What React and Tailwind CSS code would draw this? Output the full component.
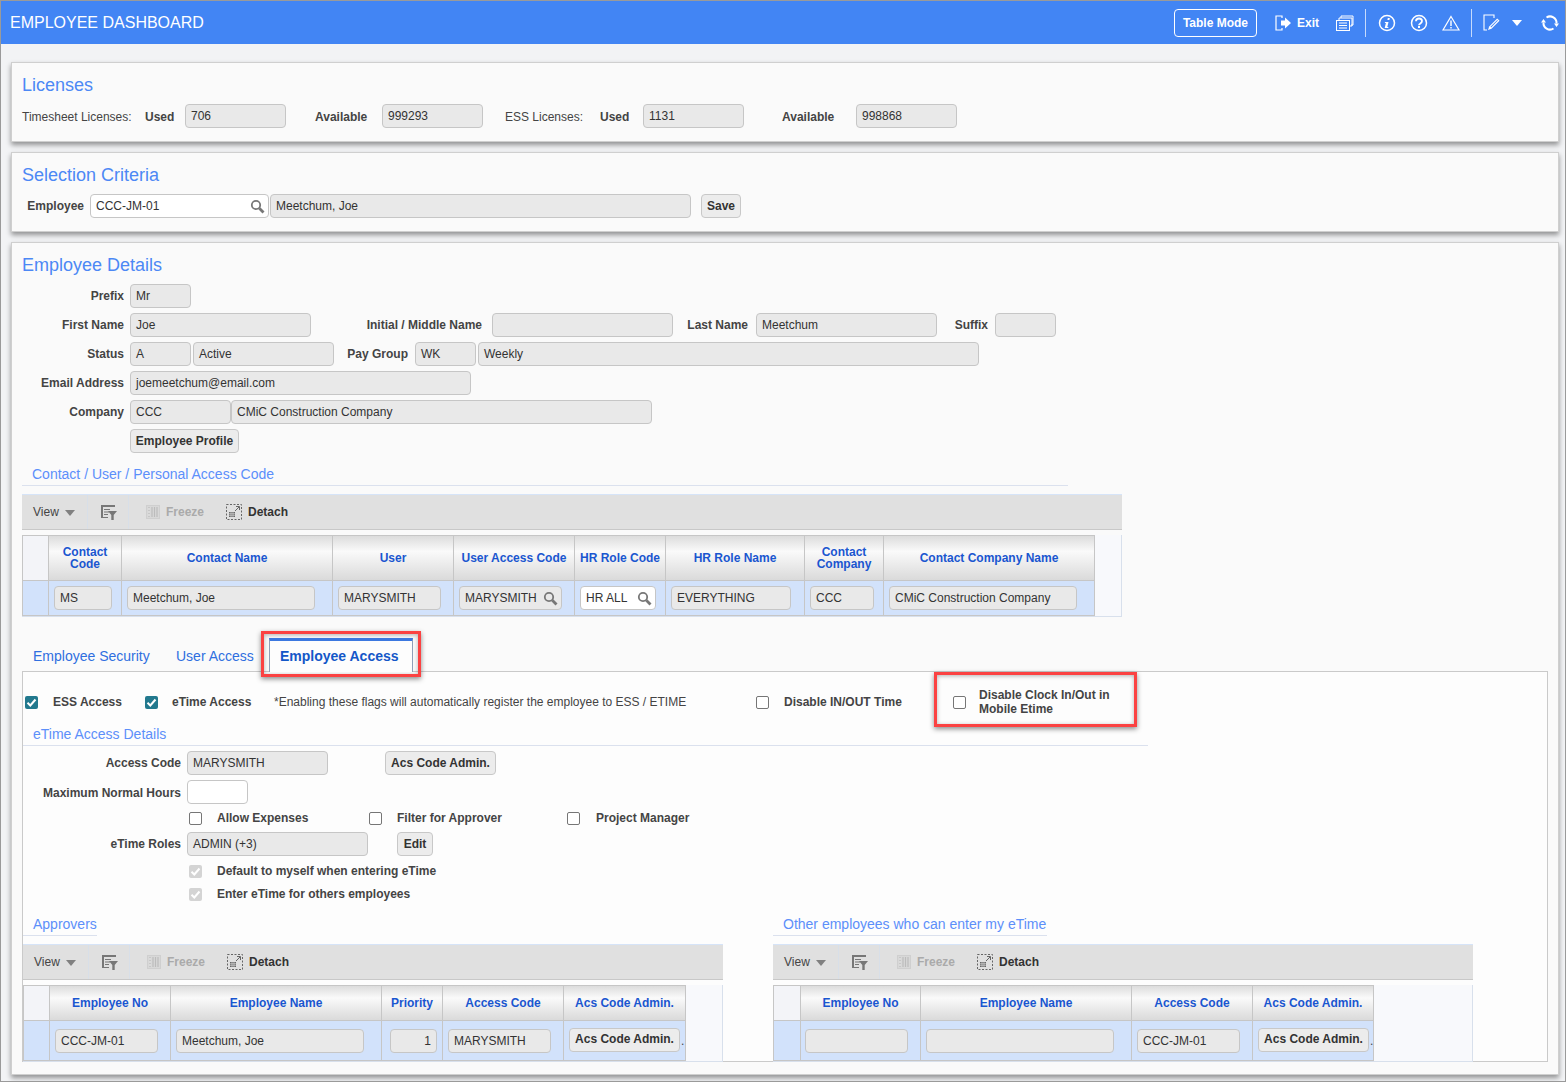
const SearchIcon = () => (
  <svg width="15" height="15" viewBox="0 0 15 15" fill="none" className="mt-[1px] shrink-0 text-[#777]">
    <circle cx="6" cy="6" r="4.200" stroke="currentColor" strokeWidth="1.800" />
    <path d="M9.300 9.300L13.500 13.500" stroke="currentColor" strokeWidth="2.800" />
  </svg>
);

const CheckMark = () => (
  <svg width="11" height="11" viewBox="0 0 11 11" fill="none">
    <path d="M1.500 5.800L4.300 8.500L9.500 2.500" stroke="white" strokeWidth="2" />
  </svg>
);

const Field = ({ className = '', children, white }) => (
  <div className={`flex h-6 shrink-0 items-center rounded-[4px] border border-[#c6c6c6] px-[5px] text-[12px] text-[#333] whitespace-nowrap ${white ? 'bg-white' : 'bg-[#e9e9e9]'} ${className}`}>
    {children}
  </div>
);

const SearchField = ({ className, children, white = true }) => (
  <Field white={white} className={`justify-between pr-[3px] ${className}`}>
    <span>{children}</span>
    <SearchIcon />
  </Field>
);

const Label = ({ className = '', children }) => (
  <div className={`shrink-0 text-[12px] font-bold text-[#444] whitespace-nowrap ${className}`}>{children}</div>
);

const Btn = ({ className = '', children }) => (
  <div className={`flex h-6 shrink-0 items-center justify-center rounded-[4px] border border-[#c8c8c8] bg-[#ececec] pb-[1px] text-[12px] font-bold text-[#333] whitespace-nowrap ${className}`}>
    {children}
  </div>
);

const Box = ({ state, className = '' }) => {
  if (state === 'on') {
    return (
      <span className={`flex size-[13px] shrink-0 items-center justify-center rounded-[2px] bg-[#22798e] ${className}`}>
        <CheckMark />
      </span>
    );
  }
  if (state === 'disabled') {
    return (
      <span className={`flex size-[13px] shrink-0 items-center justify-center rounded-[2px] bg-[#d4d4d4] ${className}`}>
        <CheckMark />
      </span>
    );
  }
  return <span className={`size-[13px] shrink-0 rounded-[2px] border border-[#767676] bg-white ${className}`} />;
};

const Heading = ({ className = '', children }) => (
  <div className={`h-[22px] border-b border-[#dbe1ee] pl-[10px] text-[14px] leading-[20px] text-[#5c8ffa] ${className}`}>{children}</div>
);

const PanelTitle = ({ children }) => (
  <div className="text-[18px] leading-[22px] text-[#4c88f5]">{children}</div>
);

const Row = ({ className = 'mt-[5px]', children }) => <div className={`flex h-6 items-center ${className}`}>{children}</div>;

const FilterIcon = () => (
  <svg width="16" height="15" viewBox="0 0 16 15" className="text-[#777]" fill="none">
    <path d="M0 0h14v2H2v10h5v1H0z" fill="currentColor" />
    <path d="M3 4h6v1H3zM3 6.500h5v1H3zM3 9h4v1H3z" fill="currentColor" />
    <path d="M7 6h9l-3.300 4v5h-2.400v-5z" fill="currentColor" />
  </svg>
);

const FreezeIcon = () => (
  <svg width="14" height="14" viewBox="0 0 14 14" fill="none">
    <rect x="0.500" y="0.500" width="13" height="13" fill="#d8d8d8" stroke="#cfcfcf" />
    <path d="M3 2v10M6 2v10M8.500 2v10M11 2v10" stroke="#bcbcbc" strokeWidth="1.200" />
    <path d="M2 4h2M2 7h2M2 10h2" stroke="#eeeeee" />
  </svg>
);

const DetachIcon = () => (
  <svg width="16" height="16" viewBox="0 0 16 16" fill="none" className="text-[#666]">
    <rect x="0.500" y="0.500" width="15" height="15" stroke="currentColor" strokeDasharray="2 1.500" />
    <path d="M9 7l4-4M10 2.500h3.500V6" stroke="currentColor" />
    <path d="M3 8h6v5H3z" fill="currentColor" />
    <path d="M3 9.700h6M3 11.300h6M5 8v5M7 8v5" stroke="#e0e0e0" strokeWidth="0.600" />
  </svg>
);

const Toolbar = ({ className = '' }) => (
  <div className={`flex h-9 items-center border-t border-b border-t-[#d6e4f8] border-b-[#c8c8c8] bg-[#e0e0e0] text-[12px] ${className}`}>
    <div className="flex h-full w-[66px] shrink-0 items-center border-r border-[#d8dfe8] pl-[11px] text-[#444]">
      View
      <span className="mt-[2px] ml-[6px] border-x-[5px] border-t-[6px] border-x-transparent border-t-[#808080]" />
    </div>
    <div className="flex h-full w-[41px] shrink-0 items-center justify-center border-r border-[#d8dfe8] pl-[1px]">
      <FilterIcon />
    </div>
    <div className="ml-[17px] flex items-center font-bold text-[#aaa]">
      <FreezeIcon />
      <span className="ml-[6px]">Freeze</span>
    </div>
    <div className="ml-[22px] flex items-center font-bold text-[#333]">
      <DetachIcon />
      <span className="ml-[6px]">Detach</span>
    </div>
  </div>
);

const DataTable = ({ columns, headClass, rowClass, firstClass = 'w-[26px]', className = '' }) => (
  <div className={`flex items-start border-r border-b border-[#d8e0ec] bg-[#f8f9fc] ${className}`}>
    <div className="flex flex-col border-t border-l border-[#c6c6c6]">
      <div className="flex">
        <div className={`shrink-0 border-r border-b border-[#c6c6c6] bg-[#f3f4f8] ${firstClass} ${headClass}`} />
        {columns.map((c) => (
          <div
            key={c.key}
            className={`flex shrink-0 items-center justify-center border-r border-b border-[#c6c6c6] bg-linear-to-b from-[#dcdcdc] via-[#fafafa] via-35% to-[#dadada] text-center text-[12px] leading-[12px] font-bold text-[#1a56d0] ${headClass} ${c.w}`}
          >
            {c.label}
          </div>
        ))}
      </div>
      <div className="flex border-b border-[#c6c6c6]">
        <div className={`shrink-0 border-r border-[#c6c6c6] bg-[#d2e2fb] ${firstClass} ${rowClass}`} />
        {columns.map((c) => (
          <div key={c.key} className={`flex shrink-0 items-center border-r border-[#c6c6c6] bg-[#d2e2fb] pl-[5px] ${rowClass} ${c.w}`}>
            {c.cell}
          </div>
        ))}
      </div>
    </div>
  </div>
);

const contactColumns = [
  { key: 'code', label: <>Contact<br />Code</>, w: 'w-[73px]', cell: <Field className="w-[58px]">MS</Field> },
  { key: 'name', label: 'Contact Name', w: 'w-[211px]', cell: <Field className="w-[188px]">Meetchum, Joe</Field> },
  { key: 'user', label: 'User', w: 'w-[121px]', cell: <Field className="w-[103px]">MARYSMITH</Field> },
  { key: 'access', label: 'User Access Code', w: 'w-[121px]', cell: <SearchField white={false} className="w-[103px]">MARYSMITH</SearchField> },
  { key: 'role', label: 'HR Role Code', w: 'w-[91px]', cell: <SearchField className="w-[76px]">HR ALL</SearchField> },
  { key: 'roleName', label: 'HR Role Name', w: 'w-[139px]', cell: <Field className="w-[120px]">EVERYTHING</Field> },
  { key: 'company', label: <>Contact<br />Company</>, w: 'w-[79px]', cell: <Field className="w-[64px]">CCC</Field> },
  { key: 'companyName', label: 'Contact Company Name', w: 'w-[211px]', cell: <Field className="w-[188px]">CMiC Construction Company</Field> },
];

const approverColumns = [
  { key: 'no', label: 'Employee No', w: 'w-[121px]', cell: <Field className="w-[103px]">CCC-JM-01</Field> },
  { key: 'name', label: 'Employee Name', w: 'w-[211px]', cell: <Field className="w-[188px]">Meetchum, Joe</Field> },
  { key: 'priority', label: 'Priority', w: 'w-[61px]', cell: <Field className="ml-[3px] w-[47px] justify-end">1</Field> },
  { key: 'access', label: 'Access Code', w: 'w-[121px]', cell: <Field className="w-[103px]">MARYSMITH</Field> },
  { key: 'admin', label: 'Acs Code Admin.', w: 'w-[122px]', cell: <><Btn className="mb-[2px] w-[111px]">Acs Code Admin.</Btn><span className="ml-[1px] text-[12px] text-[#444]">.</span></> },
];

const otherColumns = [
  { key: 'no', label: 'Employee No', w: 'w-[120px]', cell: <Field className="ml-[-1px] w-[103px]" /> },
  { key: 'name', label: 'Employee Name', w: 'w-[211px]', cell: <Field className="w-[188px]" /> },
  { key: 'access', label: 'Access Code', w: 'w-[121px]', cell: <Field className="w-[103px]">CCC-JM-01</Field> },
  { key: 'admin', label: 'Acs Code Admin.', w: 'w-[121px]', cell: <><Btn className="mb-[2px] w-[111px]">Acs Code Admin.</Btn><span className="ml-[1px] text-[12px] text-[#444]">.</span></> },
];

const Panel = ({ className = '', children }) => (
  <section className={`mr-[6px] ml-[10px] border border-[#cfcfcf] bg-[#fafafa] px-[10px] shadow-[0_3px_5px_rgba(0,0,0,0.4)] ${className}`}>
    {children}
  </section>
);

const HeaderIcons = () => (
  <div className="flex items-center text-white">
    <svg width="18" height="18" viewBox="0 0 18 18" fill="none" className="ml-[17px]">
      <path d="M8 4V2H2v14h6v-2" stroke="white" strokeWidth="1.200" />
      <path d="M7 6.500h4V3.500l6 5.500-6 5.500v-3H7z" fill="white" />
    </svg>
    <span className="ml-[5px] text-[12px] font-bold">Exit</span>
    <svg width="18" height="16" viewBox="0 0 18 16" fill="none" className="ml-[17px]" stroke="white">
      <path d="M5 3V1h12v9h-2M3 5V3h13v8h-2" strokeWidth="1" />
      <rect x="0.500" y="5.500" width="13" height="10" fill="#4285f4" />
      <path d="M3 8h8M3 10.500h8M3 13h8" strokeWidth="1.200" />
    </svg>
    <span className="ml-[11px] h-7 w-px bg-white/70" />
    <svg width="18" height="18" viewBox="0 0 18 18" fill="none" className="ml-[12px]">
      <circle cx="9" cy="9" r="7.500" stroke="white" strokeWidth="1.500" />
      <path d="M9.800 4h2l-.4 2h-2zM7 8h3.500l-1.200 5h1.200l-.3 1H6.700l1.200-5H6.800z" fill="white" />
    </svg>
    <svg width="18" height="18" viewBox="0 0 18 18" fill="none" className="ml-[14px]">
      <circle cx="9" cy="9" r="7.500" stroke="white" strokeWidth="1.500" />
      <path d="M6 7.200C6 5.500 7.300 4.500 9 4.500s3 1 3 2.600c0 2.400-3 2.200-3 4.200" stroke="white" strokeWidth="1.800" />
      <rect x="8" y="12" width="2" height="2" fill="white" />
    </svg>
    <svg width="18" height="16" viewBox="0 0 18 16" fill="none" className="ml-[14px]">
      <path d="M9 1.500L17 15H1z" stroke="white" strokeWidth="1.200" />
      <path d="M9 5.500v5.500M9 12v1.500" stroke="white" strokeWidth="1.400" />
    </svg>
    <span className="ml-[11px] h-7 w-px bg-white/70" />
    <svg width="17" height="17" viewBox="0 0 17 17" fill="none" className="ml-[11px]">
      <path d="M11 4V1H1v15h3" stroke="white" strokeWidth="1.100" />
      <path d="M5 16l1.200-3.500 8-8 2.300 2.300-8 8z" fill="white" />
      <path d="M7.500 12.800l6.800-6.800 .6 .6-6.800 6.800z" fill="#4285f4" />
    </svg>
    <span className="mt-[1px] ml-[12px] border-x-[5px] border-t-[6px] border-x-transparent border-t-white" />
    <svg width="18" height="18" viewBox="0 0 18 18" fill="none" className="ml-[19px]">
      <path d="M5.500 3.500A6.500 6.500 0 0 1 15.500 9.500" stroke="white" strokeWidth="2" />
      <path d="M12.500 14.500A6.500 6.500 0 0 1 2.500 8.500" stroke="white" strokeWidth="2" />
      <path d="M13 9.500h5L15.500 13zM0 8.500h5L2.500 5z" fill="white" />
    </svg>
  </div>
);

export default function App() {
  return (
    <div className="h-[1082px] w-[1566px] overflow-hidden border border-[#9a9a9a] bg-[#f2f3f5] font-['Liberation_Sans',Arial,sans-serif]">
      <header className="flex h-[43px] items-center justify-between bg-[#4285f4] pr-[6px] pl-[9px] text-white">
        <div className="text-[16px]">EMPLOYEE DASHBOARD</div>
        <div className="flex items-center">
          <div className="flex h-7 w-[83px] items-center justify-center rounded-[4px] border border-white text-[12px] font-bold">Table Mode</div>
          <HeaderIcons />
        </div>
      </header>

      <Panel className="mt-[18px] h-[80px] pt-[11px]">
        <PanelTitle>Licenses</PanelTitle>
        <div className="mt-[8px] flex h-6 items-center">
          <div className="w-[123px] shrink-0 pt-[2px] text-[12px] text-[#444]">Timesheet Licenses:</div>
          <Label className="w-[40px] pt-[2px]">Used</Label>
          <Field className="w-[101px]">706</Field>
          <Label className="ml-[29px] w-[67px] pt-[2px]">Available</Label>
          <Field className="w-[101px]">999293</Field>
          <div className="ml-[22px] w-[95px] shrink-0 pt-[2px] text-[12px] text-[#444]">ESS Licenses:</div>
          <Label className="w-[43px] pt-[2px]">Used</Label>
          <Field className="w-[101px]">1131</Field>
          <Label className="ml-[38px] w-[74px] pt-[2px]">Available</Label>
          <Field className="w-[101px]">998868</Field>
        </div>
      </Panel>

      <Panel className="mt-[10px] h-[80px] pt-[11px]">
        <PanelTitle>Selection Criteria</PanelTitle>
        <div className="mt-[8px] flex h-6 items-center">
          <Label className="w-[62px] text-right">Employee</Label>
          <SearchField className="ml-[6px] w-[179px]">CCC-JM-01</SearchField>
          <Field className="ml-[1px] w-[421px]">Meetchum, Joe</Field>
          <Btn className="ml-[10px] w-[40px]">Save</Btn>
        </div>
      </Panel>

      <Panel className="relative mt-[10px] h-[833px] pt-[11px]">
        <PanelTitle>Employee Details</PanelTitle>
        <Row className="mt-[8px]">
          <Label className="w-[102px] text-right">Prefix</Label>
          <Field className="ml-[6px] w-[61px]">Mr</Field>
        </Row>
        <Row>
          <Label className="w-[102px] text-right">First Name</Label>
          <Field className="ml-[6px] w-[181px]">Joe</Field>
          <Label className="w-[171px] text-right">Initial / Middle Name</Label>
          <Field className="ml-[10px] w-[181px]" />
          <Label className="w-[75px] text-right">Last Name</Label>
          <Field className="ml-[8px] w-[181px]">Meetchum</Field>
          <Label className="w-[51px] text-right">Suffix</Label>
          <Field className="ml-[7px] w-[61px]" />
        </Row>
        <Row>
          <Label className="w-[102px] text-right">Status</Label>
          <Field className="ml-[6px] w-[61px]">A</Field>
          <Field className="ml-[2px] w-[141px]">Active</Field>
          <Label className="w-[74px] text-right">Pay Group</Label>
          <Field className="ml-[7px] w-[61px]">WK</Field>
          <Field className="ml-[2px] w-[501px]">Weekly</Field>
        </Row>
        <Row>
          <Label className="w-[102px] text-right">Email Address</Label>
          <Field className="ml-[6px] w-[341px]">joemeetchum@email.com</Field>
        </Row>
        <Row>
          <Label className="w-[102px] text-right">Company</Label>
          <Field className="ml-[6px] w-[101px]">CCC</Field>
          <Field className="w-[421px]">CMiC Construction Company</Field>
        </Row>
        <Row>
          <Btn className="ml-[108px] w-[109px]">Employee Profile</Btn>
        </Row>

        <Heading className="mt-[11px] w-[1046px]">Contact / User / Personal Access Code</Heading>
        <Toolbar className="mt-[8px] w-[1100px]" />
        <DataTable columns={contactColumns} headClass="h-[45px]" rowClass="h-[34px]" className="mt-[5px] w-[1100px]" />

        <div className="mt-[22px] flex h-[32px] items-end text-[14px] text-[#2f6fe0]">
          <div className="w-[143px] pb-[4px] pl-[11px]">Employee Security</div>
          <div className="w-[104px] pb-[4px] pl-[11px]">User Access</div>
          <div className="relative z-10 mb-[-1px] flex h-[34px] w-[144px] items-center border-x border-t-[3px] border-x-[#8ea0b8] border-t-[#3c78e0] bg-[#fdfdfd] pl-[10px] font-bold text-[#1457c8]">
            Employee Access
          </div>
        </div>

        <div className="h-[391px] border border-[#cacaca] bg-[#fdfdfd]">
          <div className="mt-[8px] flex h-[44px] items-center text-[12px]">
            <Box state="on" className="ml-[2px]" />
            <Label className="ml-[15px] w-[92px]">ESS Access</Label>
            <Box state="on" />
            <Label className="ml-[14px] w-[102px]">eTime Access</Label>
            <div className="w-[482px] shrink-0 text-[#444]">*Enabling these flags will automatically register the employee to ESS / ETIME</div>
            <Box />
            <Label className="ml-[15px] w-[169px]">Disable IN/OUT Time</Label>
            <Box />
            <Label className="ml-[13px] leading-[14px]">Disable Clock In/Out in<br />Mobile Etime</Label>
          </div>

          <Heading className="w-[1125px]">eTime Access Details</Heading>
          <Row>
            <Label className="w-[158px] text-right">Access Code</Label>
            <Field className="ml-[6px] w-[141px]">MARYSMITH</Field>
            <Btn className="ml-[57px] w-[111px]">Acs Code Admin.</Btn>
          </Row>
          <Row>
            <Label className="w-[158px] pt-[1px] text-right">Maximum Normal Hours</Label>
            <Field white className="ml-[6px] w-[61px]" />
          </Row>
          <Row className="mt-[2px]">
            <Box className="ml-[166px]" />
            <Label className="ml-[15px] w-[152px]">Allow Expenses</Label>
            <Box />
            <Label className="ml-[15px] w-[170px]">Filter for Approver</Label>
            <Box />
            <Label className="ml-[16px]">Project Manager</Label>
          </Row>
          <Row className="mt-[2px]">
            <Label className="w-[158px] text-right">eTime Roles</Label>
            <Field className="ml-[6px] w-[181px]">ADMIN (+3)</Field>
            <Btn className="ml-[29px] w-[36px]">Edit</Btn>
          </Row>
          <div className="mt-[5px] flex h-5 items-center">
            <Box state="disabled" className="ml-[166px]" />
            <Label className="ml-[15px]">Default to myself when entering eTime</Label>
          </div>
          <div className="mt-[3px] flex h-5 items-center">
            <Box state="disabled" className="ml-[166px]" />
            <Label className="ml-[15px]">Enter eTime for others employees</Label>
          </div>

          <div className="mt-[10px] flex">
            <div className="w-[700px] shrink-0">
              <Heading className="w-[74px]">Approvers</Heading>
              <Toolbar className="mt-[8px]" />
              <DataTable columns={approverColumns} headClass="h-[35px]" rowClass="h-[39px]" className="mt-[5px]" />
            </div>
            <div className="ml-[50px] w-[700px] shrink-0">
              <Heading className="w-[274px]">Other employees who can enter my eTime</Heading>
              <Toolbar className="mt-[8px]" />
              <DataTable columns={otherColumns} headClass="h-[35px]" rowClass="h-[39px]" firstClass="w-[27px]" className="mt-[5px]" />
            </div>
          </div>
        </div>

        {/* red callouts */}
        <div className="absolute top-[388px] left-[249px] h-[46px] w-[160px] border-[3px] border-[#fb4242] shadow-[0_2px_5px_rgba(0,0,0,0.45),inset_0_1px_4px_rgba(0,0,0,0.3)]" />
        <div className="absolute top-[429px] left-[922px] h-[55px] w-[203px] border-[3px] border-[#fb4242] shadow-[0_2px_5px_rgba(0,0,0,0.45),inset_0_1px_4px_rgba(0,0,0,0.3)]" />
      </Panel>
    </div>
  );
}
